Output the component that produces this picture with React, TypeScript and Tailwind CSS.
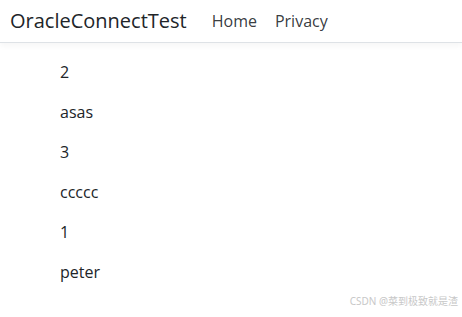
const ROWS = ['2', 'asas', '3', 'ccccc', '1', 'peter'];

export default function App() {
  return (
    <div className="relative h-[317px] w-[462px] overflow-hidden bg-white text-[#212529] font-['Open_Sans','Noto_Sans',sans-serif]">
      <header className="flex h-[43px] items-center border-b border-[#dee2e6] shadow-[0_3px_6px_rgba(0,0,0,0.04)]">
        <span className="ml-[10px] text-[20px] leading-none text-[#212529]">OracleConnectTest</span>
        <nav className="ml-[25px] flex gap-[18px] text-[16px] text-[#212529]/90">
          <span>Home</span>
          <span>Privacy</span>
        </nav>
      </header>
      <main className="flex flex-col gap-[16px] pl-[60px] pt-[17px]">
        {ROWS.map((r, i) => (
          <p key={i} className="text-[16px] leading-[24px]">{r}</p>
        ))}
      </main>
      <span className="absolute right-[4px] bottom-[8px] text-[10px] text-[#c8c8c8] font-['Noto_Sans','Noto_Sans_CJK_SC',sans-serif]">
        CSDN @菜到极致就是渣
      </span>
    </div>
  );
}
